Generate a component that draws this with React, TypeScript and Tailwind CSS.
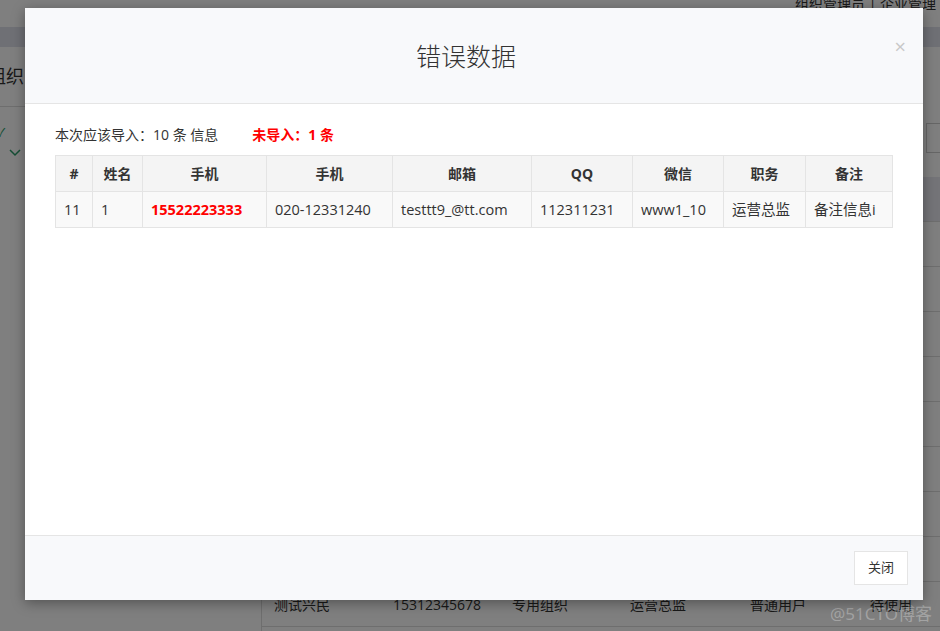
const FONT = "font-['Open_Sans','Noto_Sans_CJK_SC',sans-serif]";

const columns = [
  { label: "#", width: "w-[37px]" },
  { label: "姓名", width: "w-[50px]" },
  { label: "手机", width: "w-[124px]" },
  { label: "手机", width: "w-[126px]" },
  { label: "邮箱", width: "w-[139px]" },
  { label: "QQ", width: "w-[101px]" },
  { label: "微信", width: "w-[91px]" },
  { label: "职务", width: "w-[82px]" },
  { label: "备注", width: "w-[87px]" },
];

const errorRow = [
  "11",
  "1",
  "15522223333",
  "020-12331240",
  "testtt9_@tt.com",
  "112311231",
  "www1_10",
  "运营总监",
  "备注信息i",
];

const emptyRows = Array.from({ length: 8 });

function BackgroundPage() {
  return (
    <div className="flex h-[631px] w-[940px] flex-col overflow-hidden bg-white text-[#333]">
      <div className="flex h-[27px] items-start justify-end overflow-hidden pr-1">
        <span className="-mt-[6px] text-[14px] leading-[20px]">组织管理员 | 企业管理</span>
      </div>
      <div className="h-[20px] bg-[#dfe1ea]" />
      <div className="flex flex-1">
        <div className="flex w-[262px] flex-col border-r border-[#ddd]">
          <div className="flex h-[60px] items-center overflow-hidden border-b border-[#ddd]">
            <span className="-ml-[12px] text-[18px]">组织</span>
          </div>
          <div className="flex flex-col pt-[20px] text-[#2a9d6a]">
            <span className="-ml-[3px] text-[12px] leading-none">✓</span>
            <svg className="ml-[9px] mt-[10px]" width="12" height="8" viewBox="0 0 12 8">
              <path d="M1 1 L6 6 L11 1" fill="none" stroke="#2a9d6a" strokeWidth="1.5" />
            </svg>
          </div>
        </div>
        <div className="flex flex-1 flex-col">
          <div className="flex h-[130px] items-start justify-end pt-[76px]">
            <div className="-mr-[40px] h-[30px] w-[54px] border border-[#ccc]" />
          </div>
          <div className="h-[45px] border-b border-[#ddd] bg-[#e8e9f0]" />
          {emptyRows.map((_, i) => (
            <div key={i} className="h-[45px] border-b border-[#ddd]" />
          ))}
          <div className="flex h-[45px] items-center border-b border-[#ddd] pl-[12px] text-[14px]">
            <span className="w-[119px]">测试兴民</span>
            <span className="w-[119px]">15312345678</span>
            <span className="w-[118px]">专用组织</span>
            <span className="w-[120px]">运营总监</span>
            <span className="w-[120px]">普通用户</span>
            <span>待使用</span>
          </div>
        </div>
      </div>
    </div>
  );
}

function ErrorModal() {
  return (
    <div className="absolute left-[25px] top-[8px] flex h-[592px] w-[898px] flex-col bg-white shadow-[0_3px_12px_rgba(0,0,0,0.35)]">
      <div className="relative flex h-[96px] items-center justify-center border-b border-[#e5e5e5] bg-[#f8f9fb] pr-[16px]">
        <h2 className="mt-[2px] text-[25px] font-light text-[#333]">错误数据</h2>
        <span className="absolute right-[17px] top-[29px] text-[20px] leading-none text-[#c8c8c8]">×</span>
      </div>

      <div className="flex-1 px-[30px] pt-[21px]">
        <div className="flex items-center text-[14px] leading-[20px] text-[#333]">
          <span>本次应该导入：10 条 信息</span>
          <span className="ml-[34px] font-bold text-[#ff0000]">未导入：1 条</span>
        </div>

        <table className="mt-[10px] w-[837px] table-fixed border-collapse text-[14.5px]">
          <thead>
            <tr className="h-[36px] bg-[#f4f4f4]">
              {columns.map((c, i) => (
                <th
                  key={i}
                  className={`${c.width} border border-[#e4e4e4] text-center text-[14px] font-bold text-[#333]`}
                >
                  {c.label}
                </th>
              ))}
            </tr>
          </thead>
          <tbody>
            <tr className="h-[36px] bg-[#f9f9f9]">
              {errorRow.map((v, i) => (
                <td
                  key={i}
                  className={
                    i === 2
                      ? "border border-[#e4e4e4] px-[8px] font-bold text-[#ff0000]"
                      : "border border-[#e4e4e4] px-[8px] text-[#333]"
                  }
                >
                  {v}
                </td>
              ))}
            </tr>
          </tbody>
        </table>
      </div>

      <div className="flex h-[65px] items-center justify-end border-t border-[#e5e5e5] bg-[#f8f9fb] pr-[15px]">
        <button className="h-[34px] w-[54px] border border-[#e5e5e5] bg-white text-[13px] text-[#333]">
          关闭
        </button>
      </div>
    </div>
  );
}

export default function App() {
  return (
    <div className={`relative h-[631px] w-[940px] overflow-hidden ${FONT}`}>
      <BackgroundPage />
      <div className="absolute inset-0 bg-black/50" />
      <span className="absolute left-[830px] top-[601px] text-[17px] text-white/30">@51CTO博客</span>
      <ErrorModal />
    </div>
  );
}
